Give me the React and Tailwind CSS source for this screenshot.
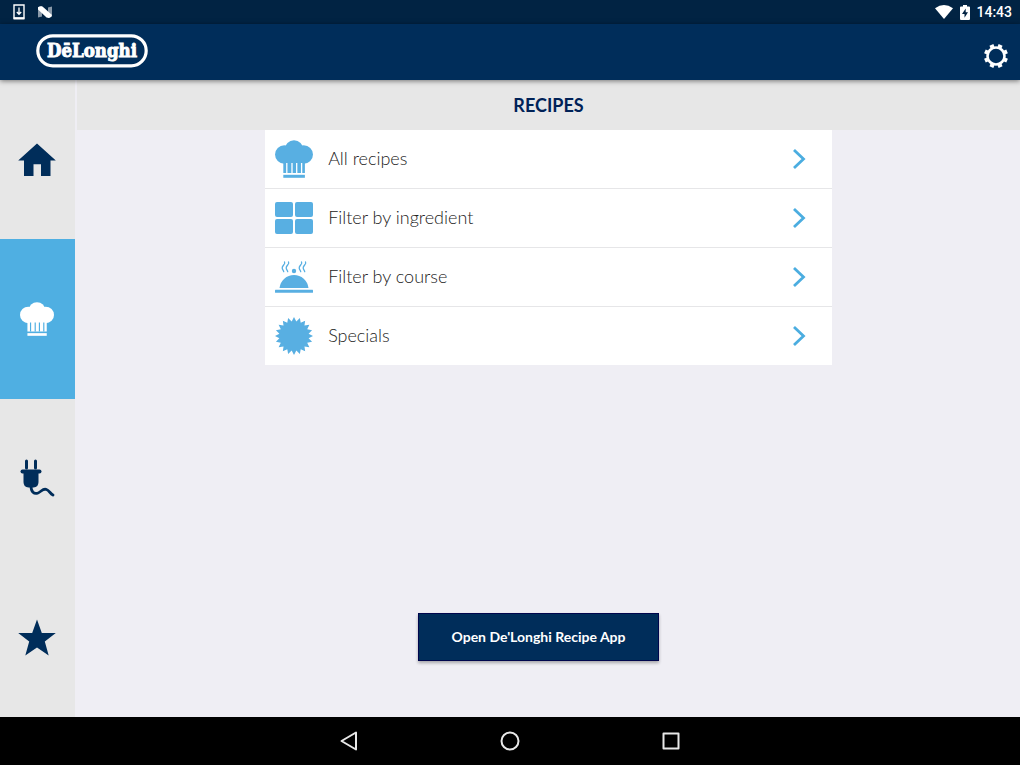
import React from "react";

function ChefHat({ className }) {
  return (
    <svg viewBox="0 0 38 38" className={className} fill="currentColor" aria-hidden="true">
      <circle cx="9.300" cy="14.500" r="9.300" />
      <circle cx="28.700" cy="14.500" r="9.300" />
      <circle cx="19" cy="9.500" r="9.300" />
      <path d="M9 12H29V24H9Z" />
      <path d="M8.300 22h21.600V33H8.300Z" />
      <path d="M11.800 23V33M17 23V33M21.700 23V33M26.600 23V33" stroke="var(--hat-bg)" strokeWidth="1.300" />
      <path d="M8.300 34.800h21.600v3H8.300Z" />
    </svg>
  );
}

function Tiles({ className }) {
  return (
    <svg viewBox="0 0 38 38" className={className} fill="currentColor" aria-hidden="true">
      <rect x="0" y="3" width="18" height="15" rx="2" />
      <rect x="20" y="3" width="18" height="15" rx="2" />
      <rect x="0" y="20" width="18" height="15" rx="2" />
      <rect x="20" y="20" width="18" height="15" rx="2" />
    </svg>
  );
}

function Cloche({ className }) {
  return (
    <svg viewBox="0 0 38 38" className={className} fill="currentColor" aria-hidden="true">
      <path d="M4.500 30a14.600 14.600 0 0 1 29 0Z" />
      <circle cx="19" cy="13" r="2.200" />
      <rect x="0" y="31.800" width="38" height="3" rx="0.500" />
      <g fill="none" stroke="currentColor" strokeWidth="1.300" strokeLinecap="round">
        <path d="M9.500 4c1.500 2-2.500 3.500-2.300 6 .1 1.800 1.500 2.300 1.500 3.700" />
        <path d="M13.500 4c1.500 2-2.500 3.500-2.300 6 .1 1.800 1.500 2.300 1.500 3.700" />
        <path d="M26.500 4c1.500 2-2.500 3.500-2.300 6 .1 1.800 1.500 2.300 1.500 3.700" />
        <path d="M30.500 4c1.500 2-2.500 3.500-2.300 6 .1 1.800 1.500 2.300 1.500 3.700" />
      </g>
    </svg>
  );
}

const burstPoints = Array.from({ length: 40 }, (_, i) => {
  const r = i % 2 ? 14.8 : 19;
  const a = (i * Math.PI) / 20 - Math.PI / 2;
  return `${19 + r * Math.cos(a)},${19 + r * Math.sin(a)}`;
}).join(" ");

function Burst({ className }) {
  return (
    <svg viewBox="0 0 38 38" className={className} fill="currentColor" aria-hidden="true">
      <polygon points={burstPoints} />
    </svg>
  );
}

function House({ className }) {
  return (
    <svg viewBox="0 0 38 34" className={className} fill="currentColor" aria-hidden="true">
      <path d="M19 0.500 37.800 17.500H32.500V33H23V21.200H15.500V33H6V17.500H0.200Z" />
    </svg>
  );
}

function Plug({ className }) {
  return (
    <svg viewBox="0 0 38 38" className={className} fill="none" stroke="currentColor" strokeLinecap="round" aria-hidden="true">
      <path d="M8.500 2V9M17.500 2V9" strokeWidth="3" />
      <path d="M4.500 12.500H21.500" strokeWidth="4" />
      <path d="M5.500 12H20.500V23q0 5-5 5.500h-5q-5-.500-5-5.500Z" fill="currentColor" stroke="none" />
      <path d="M13 27c0 6 3 8.500 7 7 3.500-1.500 5-5 8.500-3.500 3 1.200 3.500 4 6.500 5.500" strokeWidth="2.800" />
    </svg>
  );
}

function Star({ className }) {
  return (
    <svg viewBox="0 0 38 38" className={className} fill="currentColor" aria-hidden="true">
      <path d="M19 1.500 23.800 15H37.800L26.800 23.600 30.700 37.500 19 29.400 7.300 37.500 11.200 23.600.2 15H14.200Z" />
    </svg>
  );
}

function Gear() {
  return (
    <svg viewBox="0 0 24 24" className="size-6" fill="none" stroke="currentColor" aria-hidden="true">
      <circle cx="12" cy="12" r="8.500" strokeWidth="2.600" />
      <g strokeWidth="4.200">
        {[22.5, 67.5, 112.5, 157.5, 202.5, 247.5, 292.5, 337.5].map((a) => (
          <path key={a} d="M12 3.200V0" transform={`rotate(${a} 12 12)`} />
        ))}
      </g>
    </svg>
  );
}

function Chevron() {
  return (
    <svg viewBox="0 0 14 22" className="h-[22px] w-3.5 text-[#4bade0]" fill="none" stroke="currentColor" strokeWidth="2.800" aria-hidden="true">
      <path d="M2 2 11.500 11 2 20" />
    </svg>
  );
}

const tabs = [
  { label: "Home", Icon: House, size: "h-[34px] w-[38px]" },
  { label: "Recipes", Icon: ChefHat, size: "size-[34px]", active: true },
  { label: "Appliances", Icon: Plug, size: "size-[38px]" },
  { label: "Favourites", Icon: Star, size: "size-[38px]" },
];

const rows = [
  { label: "All recipes", Icon: ChefHat },
  { label: "Filter by ingredient", Icon: Tiles },
  { label: "Filter by course", Icon: Cloche },
  { label: "Specials", Icon: Burst },
];

export default function App() {
  return (
    <div className="flex min-h-screen flex-col bg-[#efeef4] font-['Lato',sans-serif]">
      <div className="flex h-6 items-center bg-[#012343] pr-2 pl-[13px] text-white">
        <svg viewBox="0 0 12 16" className="h-4 w-3" fill="none" stroke="currentColor" aria-hidden="true">
          <path d="M1 1H11V14H1Z" strokeWidth="1.400" />
          <path d="M.5 14.500h11" strokeWidth="2" />
          <path d="M6 3.500V9.500M3.800 8 6 10.300 8.200 8" strokeWidth="1.300" />
        </svg>
        <svg viewBox="0 0 16 12" className="ml-3 h-3 w-4" aria-hidden="true">
          <path d="M1 1.500 5 0V10.500L1 11.500ZM11 1.500 15 .500V10.500L11 12Z" fill="#8998a8" />
          <path d="M1 1.200Q3-.5 5.500 .5L15 9Q14.500 11.500 12 12L9.500 11.500 1 3.500Z" fill="#fff" />
        </svg>
        <div className="ml-auto flex items-center">
          <svg viewBox="0 0 18 14" className="h-3.5 w-[18px]" fill="currentColor" aria-hidden="true">
            <path d="M0 3.200Q9-3.200 18 3.200L9 14Z" />
          </svg>
          <svg viewBox="0 0 10 15" className="ml-[7px] h-[15px] w-2.5" aria-hidden="true">
            <path d="M3 0H7V1.500H9Q10 1.500 10 2.500V14Q10 15 9 15H1Q0 15 0 14V2.500Q0 1.500 1 1.500H3Z" fill="#fff" />
            <path d="M5.700 3.500 2 9H4.500V12.800L8 7.300H5.700Z" fill="#012343" />
          </svg>
          <span className="ml-1.5 font-['Roboto',sans-serif] text-sm leading-6 font-medium">14:43</span>
        </div>
      </div>

      <header className="relative flex h-14 items-center justify-between bg-[#002d5a] pr-3 pl-9 text-white shadow-[0_1px_5px_rgba(0,0,0,0.5)]">
        <svg viewBox="0 0 112 34" className="mb-0.5 h-[34px] w-28" role="img" aria-label="DeLonghi">
          <rect x="1.800" y="1.800" width="108.400" height="30" rx="15" fill="none" stroke="#fff" strokeWidth="3.200" />
          <text x="56" y="22.500" textAnchor="middle" fill="#fff" stroke="#fff" strokeWidth="0.900" fontFamily="'DejaVu Serif Condensed','DejaVu Serif',serif" fontWeight="700" fontSize="18.500">DēLonghi</text>
        </svg>
        <button type="button" aria-label="Settings" className="mt-2">
          <Gear />
        </button>
      </header>

      <div className="flex flex-1">
        <nav className="flex w-[77px] shrink-0 flex-col border-r-2 border-[#efeef4] bg-[#e7e7e7]" aria-label="Sections">
          {tabs.map(({ label, Icon, size, active }) => (
            <button
              key={label}
              type="button"
              aria-label={label}
              className={`flex flex-1 items-center justify-center ${active ? "bg-[#4fafe2] text-white [--hat-bg:#4fafe2]" : "text-[#002d5a]"} pr-px`}
            >
              <Icon className={size} />
            </button>
          ))}
        </nav>

        <main className="flex flex-1 flex-col items-center">
          <h1 className="w-full bg-[#e7e7e7] text-center text-lg leading-[50px] font-bold text-[#002257]">RECIPES</h1>
          <ul className="w-[60.1%] divide-y divide-[#e6e6e8] bg-white">
            {rows.map(({ label, Icon }) => (
              <li key={label}>
                <button type="button" className="flex h-[58px] w-full items-center pr-[26px] pl-2.5 text-left">
                  <Icon className="size-[38px] text-[#58afe2] [--hat-bg:#ffffff]" />
                  <span className="ml-[15px] flex-1 pb-0.5 text-lg font-light text-[#222]">{label}</span>
                  <Chevron />
                </button>
              </li>
            ))}
          </ul>
          <button
            type="button"
            className="mt-auto mr-5 mb-14 h-12 border border-[#00064d] bg-[#002d5a] px-8 text-sm font-bold text-white shadow-[0_2px_3px_rgba(0,0,0,0.3)]"
          >
            Open De'Longhi Recipe App
          </button>
        </main>
      </div>

      <div className="flex h-12 items-center justify-center bg-black text-[#e8e8e8]">
        <button type="button" aria-label="Back" className="flex h-12 w-[161px] items-center justify-center">
          <svg viewBox="0 0 20 20" className="size-5" fill="none" stroke="currentColor" strokeWidth="2" strokeLinejoin="round" aria-hidden="true">
            <path d="M17 1.500V18.500L2.500 10Z" />
          </svg>
        </button>
        <button type="button" aria-label="Home screen" className="flex h-12 w-[161px] items-center justify-center">
          <svg viewBox="0 0 20 20" className="size-5" fill="none" stroke="currentColor" strokeWidth="2" aria-hidden="true">
            <circle cx="10" cy="10" r="8.500" />
          </svg>
        </button>
        <button type="button" aria-label="Recent apps" className="flex h-12 w-[161px] items-center justify-center">
          <svg viewBox="0 0 20 20" className="size-5" fill="none" stroke="currentColor" strokeWidth="2" strokeLinejoin="round" aria-hidden="true">
            <path d="M2.500 2.500H17.500V17.500H2.500Z" />
          </svg>
        </button>
      </div>
    </div>
  );
}
